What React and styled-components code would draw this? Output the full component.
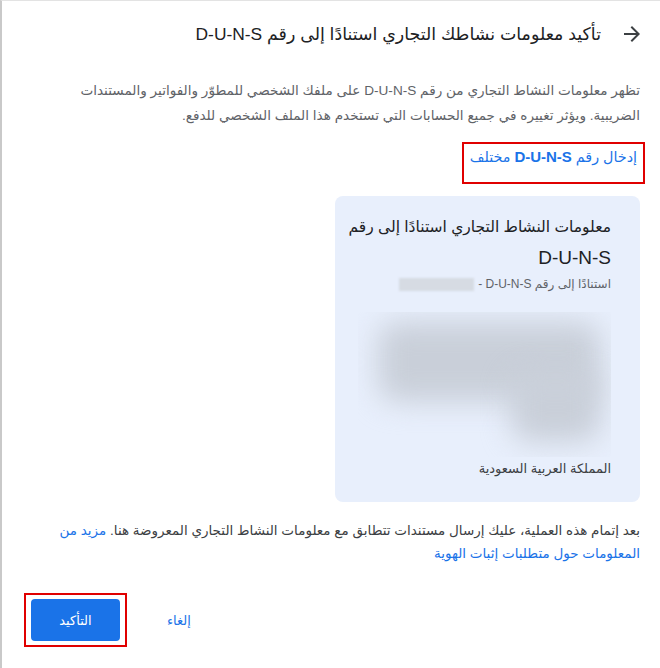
import React from "react";
import styled, { createGlobalStyle } from "styled-components";

const GlobalStyle = createGlobalStyle`
  html, body {
    margin: 0;
    padding: 0;
    background: #ffffff;
  }
  body {
    font-family: "Liberation Sans", "DejaVu Sans", Arial, sans-serif;
  }
`;

const Page = styled.div`
  direction: rtl;
  min-height: 668px;
  box-sizing: border-box;
  border-top: 1px solid #e3e3e3;
  border-left: 2px solid #c9c9c9;
  padding: 0 20px 0 22px;
  color: #202124;
`;

const Header = styled.div`
  display: flex;
  align-items: center;
  gap: 19px;
  height: 66px;
`;

const BackButton = styled.span`
  display: flex;
  width: 24px;
  height: 24px;
  margin-right: -4px;
  color: #3c4043;
`;

const Title = styled.h1`
  margin: 0;
  font-size: 17.4px;
  font-weight: normal;
  color: #202124;
`;

const Description = styled.p`
  margin: 11px 0 0;
  padding-left: 30px;
  font-size: 13.6px;
  line-height: 25px;
  color: #5f6368;
`;

const LinkBox = styled.div`
  display: flex;
  margin-top: 14px;
  margin-right: -5px;
`;

const Outlined = styled.div`
  border: 2px solid #e00000;
  padding: ${(p) => p.$pad || "4px 6px 16px 6px"};
  display: inline-flex;
  align-items: flex-start;
`;

const Link = styled.a`
  color: #1a73e8;
  font-size: 14.3px;
  line-height: 18px;
  text-decoration: none;
  cursor: pointer;

  b {
    font-size: 15px;
  }
`;

const Card = styled.div`
  margin-top: 12px;
  width: 305px;
  box-sizing: border-box;
  background: #e8effc;
  border-radius: 8px;
  padding: 15px 29px 23px 5px;
`;

const CardTitle = styled.h2`
  margin: 0;
  font-size: 15.5px;
  line-height: 31px;
  font-weight: normal;
  color: #202124;

  span {
    font-size: 19px;
  }
`;

const CardSub = styled.div`
  display: flex;
  align-items: center;
  gap: 4px;
  font-size: 12px;
  line-height: 20px;
  color: #5f6368;
`;

const Redacted = styled.span`
  display: inline-block;
  width: 75px;
  height: 13px;
  background: #d6dbe3;
  filter: blur(1px);
`;

const BlurredAddress = styled.div`
  position: relative;
  margin: 18px 0 0 18px;
  height: 145px;
  overflow: hidden;
`;

const BlurBlock = styled.div`
  position: absolute;
  background: #c9cfd9;
  filter: blur(14px);
  border-radius: 20px;
`;

const Country = styled.div`
  margin-top: 2px;
  font-size: 13px;
  line-height: 20px;
  color: #3c4043;
`;

const Note = styled.p`
  margin: 17px 0 0;
  font-size: 13.5px;
  line-height: 23px;
  color: #3c4043;

  a {
    color: #1a73e8;
    text-decoration: none;
  }
`;

const Actions = styled.div`
  display: flex;
  align-items: center;
  justify-content: flex-end;
  gap: 40px;
  margin-top: 28px;
`;

const CancelButton = styled.button`
  background: none;
  border: none;
  color: #1a73e8;
  font-family: inherit;
  font-size: 13px;
  padding: 0;
  cursor: pointer;
`;

const PrimaryButton = styled.button`
  width: 89px;
  height: 42px;
  border: none;
  border-radius: 4px;
  background: #1a73e8;
  color: #ffffff;
  font-family: inherit;
  font-size: 13px;
  cursor: pointer;
`;

export default function App() {
  return (
    <>
      <GlobalStyle />
      <Page>
        <Header>
          <BackButton>
            <svg viewBox="0 0 24 24" width="24" height="24">
              <path
                d="M12 4l-1.41 1.41L16.17 11H4v2h12.17l-5.58 5.59L12 20l8-8z"
                fill="currentColor"
              />
            </svg>
          </BackButton>
          <Title>تأكيد معلومات نشاطك التجاري استنادًا إلى رقم D-U-N-S</Title>
        </Header>

        <Description>
          تظهر معلومات النشاط التجاري من رقم D-U-N-S على ملفك الشخصي للمطوّر
          والفواتير والمستندات الضريبية. ويؤثر تغييره في جميع الحسابات التي
          تستخدم هذا الملف الشخصي للدفع.
        </Description>

        <LinkBox>
          <Outlined>
            <Link>
              إدخال رقم <b>D-U-N-S</b> مختلف
            </Link>
          </Outlined>
        </LinkBox>

        <Card>
          <CardTitle>
            معلومات النشاط التجاري استنادًا إلى رقم <span>D-U-N-S</span>
          </CardTitle>
          <CardSub>
            <span>استنادًا إلى رقم D-U-N-S -</span>
            <Redacted />
          </CardSub>
          <BlurredAddress>
            <BlurBlock style={{ top: 10, right: 10, left: 20, height: 80 }} />
            <BlurBlock style={{ top: 60, right: 10, width: 90, height: 70 }} />
          </BlurredAddress>
          <Country>المملكة العربية السعودية</Country>
        </Card>

        <Note>
          بعد إتمام هذه العملية، عليك إرسال مستندات تتطابق مع معلومات النشاط
          التجاري المعروضة هنا. <a>مزيد من المعلومات حول متطلبات إثبات الهوية</a>
        </Note>

        <Actions>
          <CancelButton>إلغاء</CancelButton>
          <Outlined $pad="4px 5px">
            <PrimaryButton>التأكيد</PrimaryButton>
          </Outlined>
        </Actions>
      </Page>
    </>
  );
}
